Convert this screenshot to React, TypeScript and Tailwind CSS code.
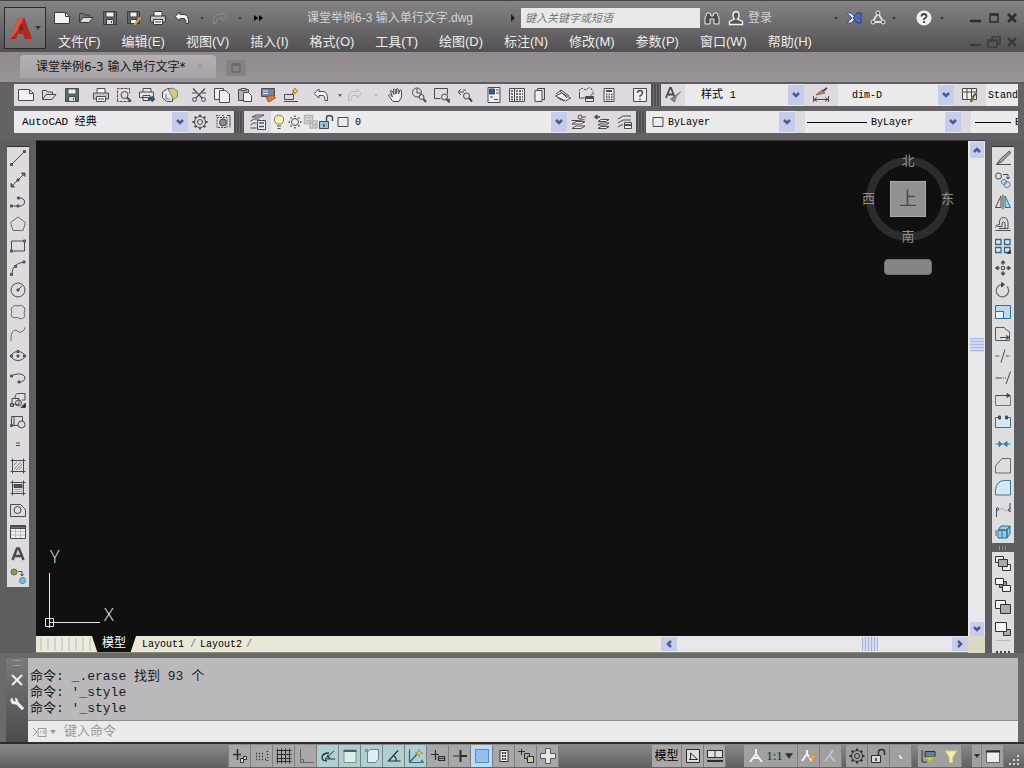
import type { ReactNode } from 'react';
import { clsx } from 'clsx';

const glyphs: Record<string, ReactNode> = {
  newFile: <><path d="M.5 2.5h11l4 4v7H.5z" fill="#f4f2f4" /><path d="M11.5 2.5v4h4" /></>,
  open: <><path d="M1.5 12.5v-9h4l1 1.5h5v2" /><path d="M1.5 12.5l3.5-5h10l-4 5z" fill="#dcdcd4" /></>,
  save: <><path d="M1.5 1.5h13v13h-13z" fill="#5c6a70" /><path d="M4 2h8v5H4z" fill="#f2f2f2" /><path d="M4.5 9.5h7v5h-7z" fill="#d8dcdc" /><path d="M9.5 11v2" /></>,
  saveAs: <><path d="M1.5 1.5h12v12h-12z" fill="#666" /><path d="M4 2h7v5H4zM4.5 9.5h6v4h-6z" fill="#f2f2f2" /><path d="M14.5 7.5l-6 7" stroke="#d9a441" strokeWidth="2" /></>,
  print: <><path d="M4 6V1.5h8V6" fill="#f6f6f6" /><path d="M.5 6h15v6H.5z" fill="#c2c2c6" /><path d="M3.5 9.5h9v5h-9z" fill="#f6f6f6" /><path d="M5 12h6" /></>,
  preview: <><path d="M1.5 14.5v-13h12v5M13.5 13.5v1h-12" strokeDasharray="3 1" /><circle cx="8.5" cy="8" r="3.5" /><path d="M11 10.5l4 4" strokeWidth="2" /></>,
  publish: <><path d="M4 5V1.5h8V5M.5 5h14v5.5H.5zM4 8.5h7v5H4z" fill="#e6e4e6" /><path d="M9 12h6M12.5 9.5L15 12l-2.5 2.5" stroke="#28566e" strokeWidth="2" /></>,
  dwf: <><path d="M.5 5l5-3.5h5v13h-6l-4-4z" fill="#e8e8e8" /><path d="M6 2.5l5-1.5 4.5 3v6l-4 2.5z" fill="#d9c778" stroke="#7d8c80" /><path d="M4 7v5h4" stroke="#577f98" /></>,
  cut: <><path d="M2 1.5l9 9.5M14 1.5L5 11M1 6h4M11 6h4" strokeWidth="1.2" /><circle cx="3.5" cy="12.5" r="2" /><circle cx="12.5" cy="12.5" r="2" /></>,
  copy: <><path d="M.5 1.5h9v11h-9z" fill="#f2f0f2" /><path d="M5.5 3.5h6l4 3.5v8.5h-10z" fill="#f2f0f2" /></>,
  paste: <><path d="M1.5 2.5h10v11h-10z" fill="#b2b0b2" /><path d="M4 1.5h5v2H4z" fill="#ddd" /><path d="M6.5 5.5h5l3 3v6h-8z" fill="#f2f0f2" /></>,
  match: <><path d="M1.5 1.5h13v8h-13z" fill="#6f84a0" /><path d="M3 4h5M3 6.5h5" stroke="#eef" /><path d="M6 10l7-2 2.5 3-7 4z" fill="#d77b3a" stroke="#a65020" /></>,
  block: <><path d="M1.5 7.5h9v5h-9z" /><path d="M1 14.5h14M8 8l5-5" /><path d="M12 1l1 2 2 1-2 1-1 2-1-2-2-1 2-1z" fill="#e6c84c" stroke="#a88d25" /></>,
  undo: <path d="M6 2L1 6.5 6 11V8.5h4q2 0 2 5h2.5q.5-9-4.5-9H6z" fill="#f4f2f4" />,
  redo: <path d="M10 2l4.5 4.5L10 11V8.5H6q-2 0-2 5H1.5Q1 4.500 6 4.500h4z" />,
  pan: <path d="M5 14.5L.5 8.500 2 7.500l2.500 2.500L2.500 4q.5-1.500 1.500 0l2 3.500-.5-5q1-1.500 1.500 0l1 4.500.5-5q1-1 1.500 0l.5 5 1.500-4q1-.5 1.500.5L13.500 10 11 14.500z" fill="#f2f0f2" />,
  zoomRt: <><circle cx="6" cy="5.500" r="4.500" /><path d="M6 2v4h4" /><circle cx="10.500" cy="10" r="2.500" /><path d="M12.500 12l2.500 3" strokeWidth="2" /></>,
  zoomWin: <><path d="M.5 1.500h13v6M.5 1.500v10h6" /><circle cx="10.500" cy="10" r="3" /><path d="M12.500 12.500h2.500v2.500z" strokeWidth="1.500" /></>,
  zoomPrev: <><path d="M4 2L1 5l3 3M1 5h6M6 3h3" /><circle cx="9.500" cy="9" r="3" /><path d="M12 11l3 3.500" strokeWidth="2" /></>,
  props: <><path d="M2 .5h12v15H2z" fill="#f0f2f6" /><path d="M3.500 2h5v5h-5z" fill="#375d8e" /><path d="M10 3h3M10 6h3M4 10h3M8 12.500h4" /></>,
  dcenter: <><path d="M.5 1.500h15v13H.5zM5.500 1.500v13" fill="#eee" /><path d="M2 4h2M2 7h2M2 10h2M2 12.500h2M7 4h7M7 7h7M7 10h7M7 12.500h7" strokeWidth="1.500" strokeDasharray="2 1" /></>,
  palettes: <><path d="M3 3.500h7v11H3z" fill="#eee" /><path d="M5.500 3.500v-2h7v11H10M12.500 1.500v11" /></>,
  sheet: <><path d="M.5 9l6-3 9 5-5 3z" fill="#f2f0f2" /><path d="M1 7l5-4 8 6M5 4l7 7M3 11l6 3" /></>,
  markup: <><path d="M1 4q2-4 5-2t4-1 4 2 1 4-2 2" strokeDasharray="2 1" /><path d="M1.500 5v6h5M7.500 9.500h8v5h-8z" fill="#e8e6e8" /><path d="M7 11h8" strokeWidth="2" /></>,
  calc: <><path d="M3 1.500h10v13H3z" fill="#eee" /><path d="M5 4h6" strokeWidth="2" /><path d="M5 7.500h7M5 10h7M5 12.500h7" strokeWidth="1.500" strokeDasharray="1.500 1" /></>,
  help: <><path d="M1.500 1.500h13v13h-13z" fill="#f2f0f2" /><path d="M5.500 6q0-2.500 2.500-2.500T10.500 6q0 1.500-2.500 3v1M8 11.500v1.500" strokeWidth="1.500" /></>,
  textStyle: <><path d="M1 11L5 1h1l4 10M3 7.500h6" strokeWidth="1.800" /><path d="M15.500 5q-5 3-6 10l-4-3z" fill="#888" stroke="#777" /></>,
  dimStyle: <><path d="M.5 9v6M15.500 9v6M1 12.500h14M4 10.500l-3 2 3 2M12 10.500l3 2-3 2" /><path d="M3 8l6-5 3 3z" fill="#a98468" stroke="#87684f" /><path d="M10 4l4-3" strokeWidth="2" /></>,
  tableStyle: <><path d="M.5 1.500h14v11H.5zM.5 5h14M5 1.500v11M9.500 1.500v11" fill="#f2f0e6" /><path d="M15 6q-4 2-6 9" stroke="#6b6b52" strokeWidth="2.500" /></>,
  gear: <><circle cx="8" cy="8" r="5.500" /><circle cx="8" cy="8" r="2.500" /><path d="M8 .5v2M8 13.500v2M.5 8h2M13.500 8h2M2.700 2.700l1.500 1.500M11.800 11.800l1.500 1.500M2.700 13.300l1.500-1.500M11.800 4.200l1.500-1.500" strokeWidth="2" /></>,
  wsSave: <><path d="M2 3.500h10v10H2zM1 1.500h4M7 1.500h3" strokeDasharray="2 1" /><circle cx="8" cy="8.500" r="3.500" fill="#8a888a" /><path d="M12 1.500h3v12" /></>,
  layers: <><path d="M2 3l4-2h8l-4 2zM.5 7l4-2h5M.5 11l3-2h3M.5 14h6" /><path d="M7.500 6.500h8v9h-8z" fill="#eef0f6" /><path d="M9 9h5M9 12.500h5" strokeWidth="1.500" stroke="#3c5084" /></>,
  bulb: <><path d="M5.500 10q-3-3-2-6 1.500-3 4.500-3t4.500 3q1 3-2 6z" fill="#f1edb4" stroke="#8d8a54" /><path d="M6 12h4M6.500 14.500h3" /></>,
  sun: <><circle cx="8" cy="8" r="3.500" fill="#eeecdc" /><path d="M8 1.500V3M8 13v1.500M1.500 8H3M13 8h1.500M3.500 3.500l1 1M11.500 11.500l1 1M3.500 12.500l1-1M11.500 4.500l1-1" strokeWidth="1.500" /></>,
  vpSun: <path d="M1.500 1.500h8v8h-8zM7 7h7v7H7zM3 4h5M3 7h3M9 10h4M9 12h4" fill="#ddd" stroke="#b4b2b4" strokeWidth="1.500" />,
  lock: <><path d="M.5 7.500h9v7h-9z" fill="#8fc3d2" /><path d="M7.500 7V4q0-2.500 3-2.500t3 2.500v3M5 10v3" strokeWidth="1.500" /></>,
  layerCur: <><path d="M.5 6.500h7l6-1M1 10l4-2.500h9l-4 2.500zM1 14.500l4-2.500h9l-4 2.500z" fill="#f2f2f2" /><circle cx="9" cy="3" r="2" /><path d="M11 3h4" /></>,
  layerPrev: <><path d="M1 3h5M3.500 1L1 3l2.500 2" strokeWidth="1.500" /><path d="M4 7.500l3-2h8l-3 2zM4 11l3-2h8l-3 2zM4 14.500l3-2h8l-3 2z" fill="#f2f2f2" /></>,
  layerState: <><path d="M1 5l5-3h8M1 9l5-3h8M1 13l3-2h2" /><path d="M7.500 8.500h7v6h-7z" fill="#eef" /><path d="M8 11h6" strokeWidth="2" /></>,
  square: <path d="M3 3.500h10v9H3z" />,
  line: <><path d="M2 14L14 2" /><path d="M.5 13.500h2v2h-2zM13.500.5h2v2h-2z" fill="#777" /></>,
  xline: <><path d="M1 15L15 1" /><path d="M1 11.500v3.500h3.500zM15 4.500V1h-3.500zM7 7h2v2H7z" fill="#666" /></>,
  pline: <><path d="M1.500 12h8q5 0 5-4t-5-4" /><path d="M.5 11h2v2h-2zM7 11h2v2H7zM7.500 3h2v2h-2z" fill="#777" /></>,
  polygon: <path d="M8 1L15.500 6.500 13 14.500H3L.5 6.500z" stroke="#6a6a6e" />,
  rect: <><path d="M1.500 3h13v10h-13z" /><path d="M.5 12h2v2h-2zM13.500 2h2v2h-2z" fill="#999" /></>,
  arc: <><path d="M2 14Q2 3.500 14 2" /><path d="M.5 13.500h2v2h-2zM4.500 5.500h2v2h-2zM13 1h2v2h-2z" fill="#888" /></>,
  circle: <><circle cx="8" cy="8" r="7" /><path d="M8 8l4-4M7 7h2v2H7z" fill="#888" /></>,
  revcloud: <path d="M2.500 3q2-3 5.500-1 4-2 6 1 2 3 0 6 2 4-1.500 5.500-3 1-5-1-4 1-6-1-1-3 .5-4.500-2-3 .5-5z" stroke="#6a6a6e" />,
  spline: <path d="M1 15Q.5 7 4 4.500q2-1 4 1t5-.5 1.500-3.500" stroke="#6a6a6e" />,
  ellipse: <><ellipse cx="8" cy="8" rx="6.500" ry="4.500" /><path d="M.5 7h2v2h-2zM13.500 7h2v2h-2zM7 2.500h2v2H7zM7 7h2v2H7z" fill="#777" /></>,
  ellArc: <><path d="M3 5q9-3 12 2 0 5-6 5" /><path d="M.5 5h2v2h-2zM8 11h2v2H8z" fill="#777" /></>,
  insert: <><path d="M5 6q0-5 4-4.500h6V8h-3" /><path d="M2 6.500h7v6H2z" /><circle cx="8.500" cy="11" r="3" /><path d="M.5 11.500h3v3h-3z" fill="#999" /><path d="M15.500 11v4.500H11z" fill="#222" /></>,
  makeBlock: <><path d="M1.500 2.500h11v9h-11z" /><circle cx="11.500" cy="10.500" r="3.500" fill="#dedade" /><path d="M.5 10.500h2v2h-2zM4 3v8" /></>,
  point: <path d="M6 7h4M6 9.500h4" />,
  hatch: <><path d="M2.500.5v15M13.500.5v15M.5 2.500h15M.5 13.500h15" /><path d="M4 7l3-3M4 11l7-7M6 12l6-6M9 12l3-3" stroke="#888" /></>,
  gradient: <><path d="M2.500.5v15M13.500.5v15M.5 2.500h15M.5 13.500h15" /><path d="M4 4.500h8v3H4z" fill="#555" /><path d="M4 9.500h8M4 11.500h8" stroke="#aaa" /></>,
  region: <><path d="M.5 2.500h10l5 5v7H.5z" /><circle cx="7.500" cy="8" r="3.500" /></>,
  table: <><path d="M.5 1.500h15v13H.5z" fill="#f0eef0" /><path d="M1 2.500h14" strokeWidth="2.500" /><path d="M1 4.500h14" /><path d="M1 7.500h14M1 11h14M5.500 5v9M10.500 5v9" stroke="#bbb" /></>,
  mtext: <path d="M2.500 14L7 2.500h2L13.500 14M4.500 10h7" strokeWidth="2.500" />,
  addSel: <><circle cx="4" cy="4" r="3" fill="#8a9e4e" stroke="#5f6c3a" /><circle cx="12.500" cy="12.500" r="3" fill="#7bbce2" stroke="#3f86b8" /><path d="M8 3.500h4v4M10.500 6l1.500 2 1.500-2" /></>,
  erase: <><path d="M14.500 1L5 9.500 2 14l5-2.500L15.500 3z" fill="#aaa" /><path d="M1 14.500h15" /></>,
  copyObj: <><circle cx="3.500" cy="4" r="3" /><circle cx="12" cy="12.500" r="3" stroke="#4f85ad" /><circle cx="9" cy="10" r="2.500" stroke="#4f85ad" /><path d="M8 2.500h5v4M11 5l2 2 2-2" /></>,
  mirror: <><path d="M6 2v11.500H.5z" /><path d="M10 2v11.500h5.500z" fill="#a9d3e8" stroke="#2e6d90" /><path d="M8 .5v15" /></>,
  offset: <path d="M.5 14.500h15M.5 11.500q0-3 4-3v-2q0-5 4-5t4.500 5v6.500M4 12.500h9M7 11V7q1.500-2.500 3 0v5M2.500 10.500h4" />,
  array: <><path d="M.5 1.500h5.500v5H.5zM9.500 1.500h5.500v5H9.500zM.5 9.500h5.500v5H.5zM9.500 9.500h5.500v5H9.500z" fill="#dbe8f2" stroke="#356888" strokeWidth="1.300" /><path d="M15.500 12v3.500H12z" fill="#222" /></>,
  move: <><path d="M6.500 6.500h3v3h-3z" /><path d="M8 5V2M8 11v3M5 8H2M11 8h3" /><path d="M6 3l2-2.500L10 3zM6 13l2 2.500 2-2.500zM3 6L.5 8 3 10zM13 6l2.500 2-2.500 2z" fill="#444" /></>,
  rotate: <><path d="M12 4.500A6.200 6.200 0 1 1 7 2.500" stroke="#6a6a6e" strokeWidth="1.200" /><path d="M6.500.5L9.500 2.500l-3 2.500z" fill="#444" /></>,
  scale: <><path d="M.5 1.500h15v13H.5z" fill="#b8dcec" stroke="#2f6f92" /><path d="M.5 7.500h8v7h-8z" fill="#e8f4fa" stroke="#2f6f92" /></>,
  stretch: <><path d="M.5 1.500h9q1 3 5 4v9H.5z" stroke="#44606e" /><path d="M5 11.500h9M11 9.500l3 2-3 2" strokeWidth="1.200" /></>,
  trim: <><path d="M.5 8H5M11 8h4.500" strokeDasharray="3 1" /><path d="M10 1.500L6 14.500" /></>,
  extend: <><path d="M.5 8H7" /><path d="M8 8h3" strokeDasharray="1 1" /><path d="M15.500 1.500L11 14" /></>,
  breakPt: <><path d="M.5 3.500h15M.5 3.500v10h15v-10" stroke="#77757a" /><path d="M.5 3.500h14M12 1.500l3 2-3 2z" fill="#555" /></>,
  breakObj: <><path d="M4 3.500H.5v10h15v-10H12" fill="#d3e8f2" stroke="#426a80" /><path d="M3.500 2h2v3h-2zM10.500 2h2v3h-2z" fill="#2a5d80" /></>,
  join: <><path d="M.5 8h15" stroke="#3880b4" /><path d="M4 5.500L7 8l-3 2.500zM12 5.500L9 8l3 2.500z" fill="#2a7ab8" stroke="#2a7ab8" /></>,
  chamfer: <path d="M.5 15V8L7 .5h8.500V15z" stroke="#6a6a6e" />,
  fillet: <path d="M.5 15v-5q1-9.500 9-9.500h6V15z" fill="#d4e8f4" stroke="#46748e" />,
  blend: <><path d="M1.500 15V6q2-1 2 1t-2 2M15 1v9q-2-1-1.500-3L15 6" /><path d="M4 8q4-3 6 0t3-1" stroke="#b5a5cc" /></>,
  explode: <><path d="M3 6l3-4h9l-3 4zM3 6h9v8H3zM12 6l3-4v8l-3 4z" fill="#9cc9e2" stroke="#2c7197" /><path d="M1 6v6M7 6v8" stroke="#2c7197" /></>,
  orderFront: <><path d="M.5 1.500h8v6h-8z" fill="#eee" /><path d="M7.500 9.500h8v6h-8z" fill="#eee" /><path d="M3.500 4.500h9v7h-9z" fill="#aaa" /></>,
  orderBack: <><path d="M4.500 4.500h7v6h-7z" fill="#999" /><path d="M.5 1.500h8v6h-8zM7.500 8.500h8v6h-8z" fill="#f4f4f4" /></>,
  orderAbove: <><path d="M.5 1.500h10v8H.5z" fill="#f4f4f4" /><path d="M5.500 5.500h10v9h-10z" fill="#aaa" /></>,
  orderUnder: <><path d="M8.500 8.500h7v6h-7z" fill="#aaa" /><path d="M.5 1.500h11v9H.5z" fill="#f4f4f4" /></>,
  infer: <><path d="M1 6.500h8M5.500 1v11" strokeWidth="1.500" /><path d="M8.500 10.500h3v4h-3zM11.500 8.500h3v3h-3z" fill="#ddd" /></>,
  snap: <path d="M2 5.500h9M2 8.500h9M2 11.500h12M13.500 3v10" strokeDasharray="1 2" strokeWidth="1.500" />,
  grid: <path d="M1.500.5v15M5.500.5v15M9.500.5v15M13.500.5v15M.5 2.500h15M.5 6.500h15M.5 10.500h15M.5 13.500h15" />,
  ortho: <path d="M2.500 1v13.500h13M2.500 11.500h3v3" stroke="#666" />,
  polar: <><path d="M14 3L5 11h10" /><path d="M9 5q-6 0-7 4 0 4 5 4M7 7.500l3 3" strokeWidth="1.300" /></>,
  osnap: <><path d="M2 14.500V2h12v12.500z" fill="#dceee8" stroke="#7d9490" /><path d="M1.500 3h13" stroke="#4d6260" strokeWidth="2" /></>,
  osnap3d: <><path d="M3.500 4.500l2-3h9V11l-3 3.500h-8z" fill="#e0f0f2" stroke="#6f7f88" /><path d="M1.500 1.500h2v2h-2z" stroke="#6f7f88" /></>,
  otrack: <path d="M14.500 13h-12L12 2.500M8 8q3 2 2 5" strokeWidth="1.200" />,
  ducs: <><path d="M1.500 1.500v13h14M2 14L9 6M13 12l2.500 2.500" stroke="#2e6678" strokeWidth="1.200" /><path d="M11 1l1 3 3 1-3 1-1 3-1-3-3-1 3-1z" fill="#d9c88a" stroke="#a89c68" /></>,
  dyn: <path d="M1 6.500h8M5.500 2v10M8.500 8.500h6v4h-6zM9 10.500h5" strokeWidth="1.200" />,
  lwt: <><path d="M1 8h7" /><path d="M8 8h7M8.500 2v12" strokeWidth="2" /></>,
  tpy: <><path d="M1.500 1.500h13v13h-13z" fill="#8fbcec" stroke="#5c88b8" /><path d="M2 6l4-4M2 10l8-8M3 14L14 3M7 14l7-7M11 14l3-3" stroke="#a8ccee" /></>,
  qp: <><path d="M4 2.500h8v11H4z" fill="#eee" /><path d="M6 5h4M6 8h4M6 11h4" strokeWidth="2" strokeDasharray="1.500 1" /></>,
  sc: <><path d="M0 3.500h7M3.500 1v6M6.500 5.500h5v5h-5z" /><path d="M9.500 8.500h6v6h-6z" fill="#c9c8a8" /></>,
  cross: <path d="M5.500.5h5v5h5v5h-5v5h-5v-5h-5v-5h5z" fill="#e6e6e6" stroke="#555" />,
  modelSp: <><path d="M1.500 1.500h13v13h-13z" fill="#ddd" /><path d="M5.500 5v6.500h7zM4 11.500h9" /></>,
  quickView: <><path d="M.5 2.500h15v7H.5zM8 2.500v7" fill="#e0e0e0" /><path d="M0 13h16" strokeWidth="2" /></>,
  annoScale: <path d="M8 1v5M8 6L2 14M8 6l6 8M5 10h6" stroke="#f4f4f4" strokeWidth="1.800" />,
  annoVis: <><path d="M6 2v4L1 13M6 6l5 7" stroke="#f4f4f4" strokeWidth="2" /><path d="M12 5l1 3 3 1-3 1-1 4-1-4-3-1 3-1z" fill="#e3b63d" stroke="#d09838" /></>,
  annoAuto: <path d="M10 2L6 8 2 13M7 8l5 5" stroke="#c4c4c4" strokeWidth="2" />,
  unlock: <><path d="M.5 7.500h9v7h-9z" fill="#d8d8d8" /><path d="M7.500 7V4q0-2.500 3-2.500t3 2.500v3M5 10v3" strokeWidth="1.500" /></>,
  isolate: <path d="M5 6q2-1 4 2 3 4 0 4t-4-3z" fill="#dadada" stroke="#8a8a8a" />,
  hardware: <><path d="M1 2v12h5" /><path d="M4 3.500h10v5H4z" fill="#5e81a2" /><path d="M5 9l3 5 6-5z" fill="#c7d44b" stroke="#a4b034" /></>,
  lamp: <path d="M2.500 3h11L9.500 9.500v5h-3v-5z" fill="#f1efa2" stroke="#d4d088" />,
  clean: <><path d="M1.500 2.500h13v12h-13z" fill="#eee" stroke="#666" /><path d="M1 3.500h14" strokeWidth="2" /></>,
  binoc: <path d="M1 14V8l2-5h3l1 3h2l1-3h3l2 5v6h-5V9H6v5z" fill="#4d4d4d" stroke="#eee" />,
  user: <path d="M8 1.500q3 0 3 3.500T9.500 9l5 2.500v3h-13v-3l5-2.500Q5 8 5 5t3-3.500z" fill="#555" stroke="#f4f4f4" strokeWidth="1.300" />,
  exchange: <><path d="M1 3h4l5 5-5 5H1l5-5z" fill="#e8ecff" stroke="#44509a" /><path d="M15.500 3h-4.500L7 8l4 5h4.500V9.500L14 8l1.500-1.500z" fill="#5064b8" stroke="#303c86" /></>,
  triangle: <><path d="M8 3L2.500 12h11z" stroke="#e4e4e4" strokeWidth="1.800" /><circle cx="8" cy="3" r="2" fill="#555" stroke="#eee" /><circle cx="3" cy="12" r="2" fill="#555" stroke="#eee" /><circle cx="13" cy="12" r="2" fill="#555" stroke="#eee" /></>,
  question: <><circle cx="8" cy="8" r="7" fill="#eee" stroke="#fff" /><path d="M5.500 6.500q0-2.500 2.500-2.500t2.500 2.500q0 1-2.500 2.500v1M8 11v2" strokeWidth="1.800" stroke="#444" /></>,
  winMin: <path d="M2 11h11" strokeWidth="2.500" />,
  winMax: <path d="M4 4h8v8H4zM4 5h8" strokeWidth="1.500" />,
  winRestore: <path d="M6 6V3h8v7h-3M2 6h9v7H2zM2 7h9" strokeWidth="1.500" />,
  winClose: <path d="M4 4l8 8M12 4l-8 8" strokeWidth="2.500" />,
  cmdClose: <path d="M3 3l10 10M13 3L3 13" strokeWidth="2" />,
  wrench: <path d="M3 2q-2 1-1 4t5 2l6 6 2-2-6-6q0-4-3-4l1 3-2 1z" fill="#eee" stroke="#eee" strokeWidth=".5" />,
  prompt: <path d="M1 4l4 4-4 4M6 4.500h8v8H6zM8 8h2M12 6v4" />,
};

function Icon({ name, className }: { name: string; className?: string }) {
  return (
    <svg viewBox="0 0 16 16" className={clsx('w-4 h-4 shrink-0', className)} fill="none" stroke="currentColor" strokeWidth="1" aria-hidden="true">
      {glyphs[name]}
    </svg>
  );
}

function ToolButton({ name, className }: { name: string; className?: string }) {
  return (
    <button aria-label={name} className={clsx('flex items-center justify-center shrink-0 h-[22px]', className ?? 'w-[23px]')}>
      <Icon name={name} />
    </button>
  );
}

function Caret({ className }: { className?: string }) {
  return (
    <svg viewBox="0 0 6 4" className={clsx('shrink-0', className ?? 'w-1 h-[3px]')} fill="currentColor" aria-hidden="true">
      <path d="M0 0h6L3 4z" />
    </svg>
  );
}

function Chevron({ className }: { className?: string }) {
  return (
    <svg viewBox="0 0 8 8" className={clsx('w-2 h-2', className)} fill="none" stroke="#4a5c94" strokeWidth="2.500" aria-hidden="true">
      <path d="M1 2l3 3 3-3" />
    </svg>
  );
}

type ComboProps = { label: string; value: string; className: string; lead?: ReactNode; pad?: string; size?: string };

function Combo({ label, value, className, lead, pad = 'pl-1', size = 'text-[10px]' }: ComboProps) {
  return (
    <label className={clsx('flex items-center shrink-0 h-[22px] bg-[#ebeaec]', className)}>
      {lead}
      <select
        aria-label={label}
        className={clsx("appearance-none flex-1 min-w-0 h-full bg-transparent text-black outline-none font-['Liberation_Mono','Noto_Sans_CJK_SC',monospace]", pad, size)}
      >
        <option>{value}</option>
      </select>
      <span className="w-4 h-5 flex items-center justify-center shrink-0 bg-[#c5cdea] pointer-events-none">
        <Chevron />
      </span>
    </label>
  );
}

function Grip() {
  return <div className="w-2.5 h-[22px] shrink-0 bg-[repeating-linear-gradient(90deg,#4f4f4f_0_2px,#6e6e6e_2px_3px)]" />;
}

const standardGroups = [
  ['newFile', 'open', 'save'],
  ['print', 'preview', 'publish', 'dwf'],
  ['cut', 'copy', 'paste', 'match', 'block'],
];
const viewTools = ['pan', 'zoomRt', 'zoomWin', 'zoomPrev'];
const paletteTools = ['props', 'dcenter', 'palettes', 'sheet', 'markup', 'calc'];
const drawTools = ['line', 'xline', 'pline', 'polygon', 'rect', 'arc', 'circle', 'revcloud', 'spline', 'ellipse', 'ellArc', 'insert', 'makeBlock', 'point', 'hatch', 'gradient', 'region', 'table', 'mtext', 'addSel'];
const modifyTools = ['erase', 'copyObj', 'mirror', 'offset', 'array', 'move', 'rotate', 'scale', 'stretch', 'trim', 'extend', 'breakPt', 'breakObj', 'join', 'chamfer', 'fillet', 'blend', 'explode'];
const orderTools = ['orderFront', 'orderBack', 'orderAbove', 'orderUnder'];
const menus = ['文件(F)', '编辑(E)', '视图(V)', '插入(I)', '格式(O)', '工具(T)', '绘图(D)', '标注(N)', '修改(M)', '参数(P)', '窗口(W)', '帮助(H)'];
const statusToggles = ['infer', 'snap', 'grid', 'ortho', 'polar', 'osnap', 'osnap3d', 'otrack', 'ducs', 'dyn', 'lwt', 'tpy', 'qp', 'sc', 'cross'];
const activeToggles = ['polar', 'osnap', 'osnap3d', 'otrack', 'ducs'];
const history = ['命令: _.erase 找到 93 个', "命令: '_style", "命令: '_style"];

function Header() {
  return (
    <header className="flex h-[52px] pt-1 pl-1 bg-linear-to-b from-[#868486] to-[#525052] border-t border-[#444] text-[#ececec]">
      <button aria-label="应用程序菜单" className="flex items-center justify-center gap-0.5 w-[42px] h-[42px] mt-0.5 shrink-0 border border-[#2a2a2a] bg-linear-to-b from-[#8a8a8a] to-[#6c6c6c]">
        <svg viewBox="0 0 24 26" className="w-6 h-[26px]" aria-hidden="true">
          <path d="M1 24L9 2h6l8 22h-7l-2-5H9l-2 5z" fill="#b02a24" />
          <path d="M9 2h6l-5 12-9 10z" fill="#d4574a" />
          <path d="M12 8l3 7H9z" fill="#7c201c" />
        </svg>
        <Caret className="w-1.5 h-1 text-[#333]" />
      </button>

      <div className="flex-1 min-w-0">
        <div className="flex items-center h-[26px]">
          <div className="flex items-center pl-1 shrink-0 text-[#3a3a3a]">
            {['newFile', 'open', 'save', 'saveAs', 'print', 'undo'].map((name) => (
              <ToolButton key={name} name={name} className="w-6" />
            ))}
            <Caret className="w-1 h-[3px] ml-1.5" />
            <ToolButton name="redo" className="w-6 ml-1 text-[#8c8c8c]" />
            <Caret className="w-1 h-[3px] ml-1.5" />
            <button aria-label="更多" className="ml-3 flex gap-px text-black">
              <span className="border-y-3 border-y-transparent border-l-4 border-l-black" />
              <span className="border-y-3 border-y-transparent border-l-4 border-l-black" />
            </button>
          </div>
          <h1 className="ml-11 text-xs whitespace-nowrap text-[#d4d4d4]">课堂举例6-3 输入单行文字.dwg</h1>
          <div className="ml-auto flex items-center shrink-0 pr-1">
            <span className="border-y-4 border-y-transparent border-l-4 border-l-[#222] mr-1.5" />
            <input
              aria-label="搜索"
              placeholder="键入关键字或短语"
              className="w-[179px] h-5 px-1 bg-[#e8e8e8] text-[11px] italic placeholder-[#777] outline-none"
            />
            <button aria-label="查找" className="ml-1 w-[18px]"><Icon name="binoc" /></button>
            <button className="ml-1.5 flex items-center gap-1 text-xs whitespace-nowrap text-[#d4d4d4]">
              <Icon name="user" />
              登录
            </button>
            <Caret className="w-1 h-[3px] ml-[62px] text-[#333]" />
            <button aria-label="Exchange" className="ml-2 text-[#333]"><Icon name="exchange" /></button>
            <button aria-label="A360" className="ml-2"><Icon name="triangle" /></button>
            <Caret className="w-1 h-[3px] ml-1.5 text-[#333]" />
            <button aria-label="帮助" className="ml-5"><Icon name="question" /></button>
            <Caret className="w-1 h-[3px] ml-2 text-[#333]" />
            <div className="flex ml-6 gap-0.5 text-[#2c2c2c]">
              <button aria-label="最小化"><Icon name="winMin" /></button>
              <button aria-label="最大化"><Icon name="winMax" /></button>
              <button aria-label="关闭"><Icon name="winClose" /></button>
            </div>
          </div>
        </div>
        <nav className="flex items-center h-[22px] pl-3">
          <ul className="flex gap-[21px] text-[13px] whitespace-nowrap">
            {menus.map((item) => (
              <li key={item}><button>{item}</button></li>
            ))}
          </ul>
          <div className="ml-auto flex gap-0.5 pr-1 text-[#3c3c3c]">
            <button aria-label="最小化文档"><Icon name="winMin" /></button>
            <button aria-label="还原文档"><Icon name="winRestore" /></button>
            <button aria-label="关闭文档"><Icon name="winClose" /></button>
          </div>
        </nav>
      </div>
    </header>
  );
}

function FileTabs() {
  return (
    <div className="flex items-end h-8 pb-1 pl-5 bg-linear-to-b from-[#8f8b8f] to-[#989498] border-b-2 border-[#5f5b5f]">
      <div className="flex items-center justify-between w-[196px] h-[23px] pl-4 pr-3 rounded-t bg-linear-to-b from-[#b4b0b4] to-[#a7a3a7]">
        <span className="text-xs whitespace-nowrap text-[#161616] font-['DejaVu_Sans','Noto_Sans_CJK_SC',sans-serif]">课堂举例6-3 输入单行文字*</span>
        <button aria-label="关闭选项卡" className="w-2 text-[#918d91] text-[10px]">×</button>
      </div>
      <button aria-label="新建选项卡" className="flex items-center justify-center w-5 h-4 ml-2.5 mb-0.5 rounded-xs bg-[#858185] text-[#6b676b]">
        <Icon name="winMax" />
      </button>
    </div>
  );
}

function Toolbars() {
  return (
    <div className="flex flex-col gap-[5px] pl-3.5 pr-1.5 pb-[7px] bg-[#646264] text-[#4a4a50]">
      <div className="flex overflow-hidden">
        <div className="flex shrink-0 bg-[#dfdadf]">
          {standardGroups.map((group) => (
            <div key={group[0]} className="flex mr-1.5">
              {group.map((name) => <ToolButton key={name} name={name} />)}
            </div>
          ))}
          <div className="flex items-center w-[76px]">
            <ToolButton name="undo" className="w-[26px]" />
            <Caret className="w-1 h-[3px] ml-1" />
            <ToolButton name="redo" className="w-[26px] text-[#bab6ba]" />
            <Caret className="w-1 h-[3px] ml-1.5 text-[#bab6ba]" />
          </div>
          {viewTools.map((name) => <ToolButton key={name} name={name} />)}
          <div className="flex ml-1.5 mr-2">
            {paletteTools.map((name) => <ToolButton key={name} name={name} />)}
          </div>
          <ToolButton name="help" />
        </div>
        <Grip />
        <div className="flex flex-1 min-w-0 bg-[#dfdadf]">
          <ToolButton name="textStyle" className="w-6" />
          <Combo label="文字样式" value="样式 1" className="w-[119px]" pad="pl-4" size="text-[11px]" />
          <ToolButton name="dimStyle" className="w-[34px]" />
          <Combo label="标注样式" value="dim-D" className="w-[116px]" pad="pl-3.5" />
          <ToolButton name="tableStyle" className="w-8" />
          <Combo label="表格样式" value="Standard" className="w-[120px]" pad="pl-0.5" />
        </div>
      </div>

      <div className="flex overflow-hidden">
        <div className="flex shrink-0 bg-[#dfdadf]">
          <Combo label="工作空间" value="AutoCAD 经典" className="w-[174px]" pad="pl-2" size="text-[11px]" />
          <ToolButton name="gear" />
          <ToolButton name="wsSave" />
        </div>
        <Grip />
        <div className="flex shrink-0 bg-[#dfdadf]">
          <ToolButton name="layers" className="w-[27px]" />
          <Combo
            label="图层"
            value="0"
            className="w-[296px]"
            lead={['bulb', 'sun', 'vpSun', 'lock', 'square'].map((name) => <Icon key={name} name={name} />)}
          />
          <ToolButton name="layerCur" />
          <ToolButton name="layerPrev" />
          <ToolButton name="layerState" />
        </div>
        <Grip />
        <div className="flex flex-1 min-w-0 gap-2.5 bg-[#dfdadf]">
          <Combo label="颜色" value="ByLayer" className="w-[149px]" pad="pl-0.5" lead={<Icon name="square" className="ml-1" />} />
          <Combo label="线型" value="ByLayer" className="w-[156px]" lead={<span className="w-[60px] h-px ml-0.5 bg-black" />} />
          <Combo label="线宽" value="ByLayer" className="w-[130px]" lead={<span className="w-9 h-px ml-1 bg-black" />} />
        </div>
      </div>
    </div>
  );
}

function ViewCube() {
  return (
    <div className="absolute top-3 right-3 w-24 flex flex-col items-center text-[13px] leading-4 text-[#8f8f8f]">
      <div className="relative w-[84px] h-[92px] flex items-center justify-center">
        <div className="w-[84px] h-[84px] rounded-full border-8 border-[#2c2c2c]" />
        <span className="absolute top-0">北</span>
        <span className="absolute bottom-0">南</span>
        <span className="absolute -left-1">西</span>
        <span className="absolute -right-1">东</span>
        <button className="absolute w-9 h-9 bg-[#929292] border border-[#a8a8a8] text-lg text-[#484848]">上</button>
      </div>
      <button aria-label="坐标系" className="mt-3.5 w-12 h-4 rounded-sm bg-[#858585] border border-[#707070]" />
    </div>
  );
}

function Canvas() {
  return (
    <div className="relative flex-1 min-w-0 bg-[#101010]">
      <ViewCube />
      <div className="absolute left-2 bottom-2 w-[90px] h-[78px] text-[#e6e6e6]">
        <svg viewBox="0 0 60 60" className="absolute left-0 bottom-0 w-[60px] h-[60px]" fill="none" stroke="currentColor" aria-hidden="true">
          <path d="M5.500 5v55M5.500 54.500H56M1.500 50.500h8v8h-8z" />
        </svg>
        <span className="absolute left-1.5 -top-1 text-lg leading-5 font-['Open_Sans','Liberation_Sans',sans-serif] font-light">Y</span>
        <span className="absolute left-[60px] bottom-1 text-lg leading-5 font-['Open_Sans','Liberation_Sans',sans-serif] font-light">X</span>
      </div>
    </div>
  );
}

function LayoutBar() {
  return (
    <div className="flex h-[17px] bg-[#e9e8d9] border-b border-[#8b8c7c]">
      <div className="flex-2 flex items-center min-w-0 font-['Liberation_Mono','Noto_Sans_CJK_SC',monospace] text-[10px] text-black">
        <div className="w-[52px] h-3 ml-1 bg-[repeating-linear-gradient(90deg,#d2d1c8_0_2px,#eceadf_2px_7px)]" />
        <button className="h-full px-2.5 bg-[#101010] text-white text-xs leading-4 [clip-path:polygon(0_0,100%_0,88%_100%,12%_100%)]">模型</button>
        <button className="px-1.5">Layout1</button>
        <span className="text-[#777]">/</span>
        <button className="px-1">Layout2</button>
        <span className="text-[#777]">/</span>
      </div>
      <div className="flex-1 flex items-center min-w-0 bg-[#e8e7ea]">
        <button aria-label="向左滚动" className="w-4 h-3.5 ml-1 flex items-center justify-center bg-[#c8cdea]"><Chevron className="rotate-90" /></button>
        <div className="flex-1 flex justify-end pr-[74px]">
          <div className="w-4 h-3.5 bg-[repeating-linear-gradient(90deg,#a9b5dd_0_1px,#d3daf0_1px_3px)]" />
        </div>
        <button aria-label="向右滚动" className="w-4 h-3.5 flex items-center justify-center bg-[#c8cdea]"><Chevron className="-rotate-90" /></button>
      </div>
    </div>
  );
}

function Workspace() {
  return (
    <main className="flex flex-1 min-h-0 pl-[7px] pr-2.5 bg-[#5e5e60] text-[#4a4a50]">
      <div className="w-[22px] mt-1.5 self-start flex flex-col items-center bg-[#dedade] border-t border-[#2e2e2e]">
        {drawTools.map((name) => <ToolButton key={name} name={name} className="w-[22px]" />)}
      </div>

      <div className="flex flex-1 min-w-0 ml-[7px] border-t border-[#333]">
        <div className="flex flex-col flex-1 min-w-0">
          <Canvas />
          <LayoutBar />
        </div>
        <div className="flex flex-col items-center w-[17px] bg-[#e8e7ea]">
          <button aria-label="向上滚动" className="w-3.5 h-4 mt-px flex items-center justify-center bg-[#c8cbec]"><Chevron className="rotate-180" /></button>
          <div className="flex-2" />
          <div className="w-3.5 h-3.5 bg-[repeating-linear-gradient(180deg,#b3b7e4_0_1px,#d3d6f2_1px_3px)]" />
          <div className="flex-3" />
          <button aria-label="向下滚动" className="w-3.5 h-3.5 flex items-center justify-center bg-[#c8cbec]"><Chevron /></button>
          <div className="w-full h-[17px] bg-[#dcdac4]" />
        </div>
      </div>

      <div className="flex flex-col w-[22px] ml-[7px] mt-1.5 overflow-hidden">
        <div className="flex flex-col bg-[#dededf] border-t border-[#2e2e2e]">
          {modifyTools.map((name) => <ToolButton key={name} name={name} className="w-[22px]" />)}
        </div>
        <div className="h-[9px] shrink-0 flex items-center justify-center">
          <div className="w-2 h-1 bg-[repeating-linear-gradient(90deg,#999_0_1px,#555_1px_3px)]" />
        </div>
        <div className="flex-1 flex flex-col bg-[#dededf] text-[#333]">
          {orderTools.map((name) => <ToolButton key={name} name={name} className="w-[22px]" />)}
          <div className="mx-1 border-t border-[#bbb]" />
          <div className="mt-auto mx-1 border-b-2 border-dotted border-[#444]" />
        </div>
      </div>
    </main>
  );
}

function CommandLine() {
  return (
    <section className="flex px-1.5 pt-[5px] bg-[#6a6a6a]">
      <div className="flex flex-col items-center w-[22px] bg-linear-to-b from-[#7a7a7c] to-[#4c4c50] text-[#eee]">
        <div className="w-2 h-1.5 mt-0.5 border-y border-[#999]" />
        <button aria-label="关闭命令行" className="mt-1.5"><Icon name="cmdClose" className="w-3 h-3" /></button>
        <button aria-label="自定义" className="mt-2"><Icon name="wrench" className="w-3.5 h-3.5" /></button>
      </div>
      <div className="flex-1 min-w-0 font-['Liberation_Mono','Noto_Sans_CJK_SC',monospace] text-[13px] leading-4 text-[#1b1b1b]">
        <div className="h-[62px] pt-[11px] pl-0.5 bg-[#bbb9bb]">
          {history.map((line, i) => (
            <p key={i} className="h-4 whitespace-pre">{line}</p>
          ))}
        </div>
        <div className="flex items-center h-[22px] pl-1 bg-[#ebebeb] border-t border-[#8e8e8e] text-[#9a9a9a]">
          <Icon name="prompt" />
          <Caret className="w-1.5 h-1 ml-0.5" />
          <input aria-label="命令输入" placeholder="键入命令" className="flex-1 min-w-0 ml-2 bg-transparent placeholder-[#9a9a9a] outline-none" />
        </div>
      </div>
    </section>
  );
}

const cell = 'flex items-center justify-center h-[22px] border-r border-[#7e7e7e]';

function StatusBar() {
  return (
    <footer className="flex items-center h-[26px] pr-1 border-t-2 border-[#2d2d2d] bg-linear-to-b from-[#8a8a8a] to-[#606060] text-[#2e2e2e]">
      <div className="flex ml-[228px] border-l border-[#7e7e7e] bg-[#a9a7a9]">
        {statusToggles.map((name) => (
          <button
            key={name}
            aria-label={name}
            aria-pressed={activeToggles.includes(name) || name === 'tpy'}
            className={clsx(cell, 'w-[22px]', activeToggles.includes(name) && 'bg-[#aed0d2]', name === 'tpy' && 'bg-[#b9dcf4]')}
          >
            <Icon name={name} />
          </button>
        ))}
      </div>
      <div className="flex ml-auto bg-[#a9a7a9]">
        <button className={clsx(cell, 'w-[30px] text-xs text-black')}>模型</button>
        <button aria-label="布局" className={clsx(cell, 'w-[22px]')}><Icon name="modelSp" /></button>
        <button aria-label="快速查看" className={clsx(cell, 'w-[22px]')}><Icon name="quickView" /></button>
      </div>
      <div className="flex ml-[18px] bg-[#a0a0a0]">
        <button className={clsx(cell, "w-[54px] gap-0.5 text-[13px] font-['Liberation_Serif',serif]")}>
          <Icon name="annoScale" />1:1<Caret className="w-2 h-1.5" />
        </button>
        <button aria-label="注释可见性" className={clsx(cell, 'w-[22px]')}><Icon name="annoVis" /></button>
        <button aria-label="自动缩放" className={clsx(cell, 'w-[22px]')}><Icon name="annoAuto" /></button>
      </div>
      <div className="flex ml-1 bg-[#a0a0a0]">
        <button aria-label="切换工作空间" className={clsx(cell, 'w-[22px]')}><Icon name="gear" /></button>
        <button aria-label="锁定" className={clsx(cell, 'w-[22px]')}><Icon name="unlock" /></button>
        <button aria-label="隔离对象" className={clsx(cell, 'w-[22px]')}><Icon name="isolate" /></button>
      </div>
      <div className="flex ml-1.5 bg-[#a0a0a0]">
        <button aria-label="硬件加速" className="flex items-center justify-center w-[22px] h-[22px]"><Icon name="hardware" /></button>
        <button aria-label="通知" className={clsx(cell, 'w-[22px]')}><Icon name="lamp" /></button>
      </div>
      <button aria-label="状态栏菜单" className={clsx(cell, 'w-2.5 ml-2.5 bg-[#a0a0a0]')}><Caret className="w-1.5 h-1" /></button>
      <button aria-label="全屏显示" className={clsx(cell, 'w-[22px] bg-[#a0a0a0]')}><Icon name="clean" /></button>
      <svg viewBox="0 0 12 12" className="w-3 h-3 ml-1 mt-2" fill="#d2d2d2" aria-hidden="true">
        <path d="M9 1h2v2H9zM5 5h2v2H5zM9 5h2v2H9zM1 9h2v2H1zM5 9h2v2H5zM9 9h2v2H9z" />
      </svg>
    </footer>
  );
}

export default function App() {
  return (
    <div className="flex flex-col h-screen overflow-hidden bg-[#5e5e60] font-['Liberation_Sans','Noto_Sans_CJK_SC',sans-serif]">
      <Header />
      <FileTabs />
      <Toolbars />
      <Workspace />
      <CommandLine />
      <StatusBar />
    </div>
  );
}
